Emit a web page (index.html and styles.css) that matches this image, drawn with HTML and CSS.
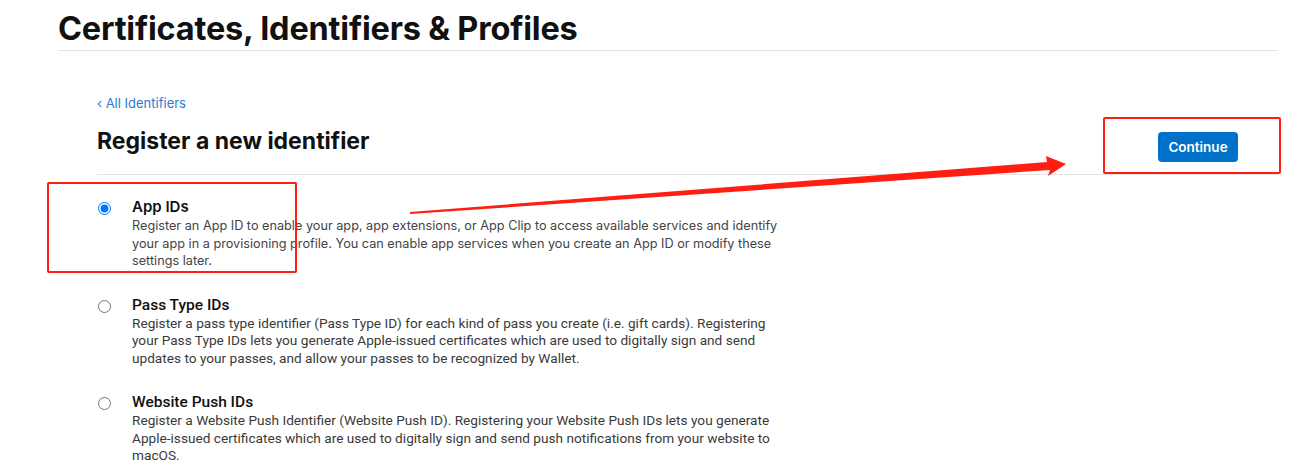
FILE: index.html
```html
<!DOCTYPE html>
<html lang="en">
<head>
<meta charset="utf-8">
<title>Certificates, Identifiers &amp; Profiles</title>
<link rel="stylesheet" href="styles.css">
</head>
<body>
<header class="page-header">
  <h1 class="page-title">Certificates, Identifiers &amp; Profiles</h1>
</header>
<main class="content">
  <a class="back-link" href="#">&lsaquo; All Identifiers</a>
  <div class="section-head">
    <h2 class="section-title">Register a new identifier</h2>
    <button class="btn-continue" type="button">Continue</button>
  </div>
  <ul class="options">
    <li class="option">
      <input class="radio" type="radio" name="idtype" checked>
      <div class="option-body">
        <div class="option-title">App IDs</div>
        <p class="option-desc">Register an App ID to enable your app, app extensions, or App Clip to access available services and identify your app in a provisioning profile. You can enable app services when you create an App ID or modify these settings later.</p>
      </div>
    </li>
    <li class="option option-alt">
      <input class="radio" type="radio" name="idtype">
      <div class="option-body">
        <div class="option-title">Pass Type IDs</div>
        <p class="option-desc">Register a pass type identifier (Pass Type ID) for each kind of pass you create (i.e. gift cards). Registering your Pass Type IDs lets you generate Apple-issued certificates which are used to digitally sign and send updates to your passes, and allow your passes to be recognized by Wallet.</p>
      </div>
    </li>
    <li class="option option-alt">
      <input class="radio" type="radio" name="idtype">
      <div class="option-body">
        <div class="option-title">Website Push IDs</div>
        <p class="option-desc">Register a Website Push Identifier (Website Push ID). Registering your Website Push IDs lets you generate Apple-issued certificates which are used to digitally sign and send push notifications from your website to macOS.</p>
      </div>
    </li>
  </ul>
</main>
<div class="mark mark-app"></div>
<div class="mark mark-btn"></div>
<svg class="arrow" width="1305" height="466" viewBox="0 0 1305 466">
  <polygon points="410,214 1050,170 1048,176 1066,164 1046,156 1047,162 410,212" fill="#ff1f12"/>
</svg>
</body>
</html>
```
FILE: styles.css
```css
html, body {
  margin: 0;
  padding: 0;
  background: #fff;
}
body {
  font-family: Inter, "Noto Sans", "Liberation Sans", sans-serif;
  color: #1d1d1f;
  width: 1305px;
  height: 466px;
  overflow: hidden;
  position: relative;
}
.page-header {
  margin: 0 27px 0 58px;
  padding-top: 9px;
  border-bottom: 1px solid #e3e3e3;
  height: 51px;
  box-sizing: border-box;
}
.page-title {
  margin: 0;
  font-size: 32.5px;
  line-height: 40px;
  font-weight: 700;
  letter-spacing: -0.2px;
  color: #111;
}
.content {
  margin: 0 27px 0 97px;
  padding-top: 44px;
}
.back-link {
  display: block;
  font-size: 13px;
  line-height: 16px;
  color: #2b7bd0;
  text-decoration: none;
}
.section-head {
  display: flex;
  align-items: flex-start;
  justify-content: space-between;
  border-bottom: 1px solid #e3e3e3;
  height: 64px;
  box-sizing: border-box;
  padding: 15px 40px 0 0;
}
.section-title {
  margin: 0;
  font-size: 23px;
  line-height: 30px;
  font-weight: 700;
  color: #111;
}
.btn-continue {
  margin-top: 6px;
  width: 80px;
  height: 30px;
  border: 0;
  border-radius: 4px;
  background: #0070c9;
  color: #fff;
  font-family: inherit;
  font-size: 13.5px;
  font-weight: 600;
  padding: 0;
}
.options {
  list-style: none;
  margin: 0;
  padding: 22px 0 0 0;
}
.option {
  display: flex;
  align-items: flex-start;
  margin-bottom: 25px;
}
.option:last-child {
  margin-bottom: 0;
}
.radio {
  margin: 5px 0 0 1px;
  width: 13px;
  height: 13px;
  flex: none;
}
.option-body {
  margin-left: 21px;
  width: 660px;
}
.option-title {
  font-size: 15px;
  line-height: 20px;
  font-weight: 600;
  color: #111;
}
.option-desc {
  margin: 0;
  font-size: 12.7px;
  line-height: 17.5px;
  color: #444;
}
.option-alt .option-body {
  font-family: Roboto, "Liberation Sans", sans-serif;
}
.option-alt .option-title {
  font-size: 15.5px;
  font-weight: 500;
}
.option-alt .option-desc {
  font-size: 13.65px;
  line-height: 17.5px;
  color: #3a3a3a;
}
.mark {
  position: absolute;
  border: 2.5px solid #ff1f12;
  border-radius: 2px;
  box-sizing: border-box;
}
.mark-app {
  left: 47px;
  top: 182px;
  width: 250px;
  height: 91px;
}
.mark-btn {
  left: 1103px;
  top: 117px;
  width: 178px;
  height: 57px;
}
.arrow {
  position: absolute;
  left: 0;
  top: 0;
  pointer-events: none;
}
```
